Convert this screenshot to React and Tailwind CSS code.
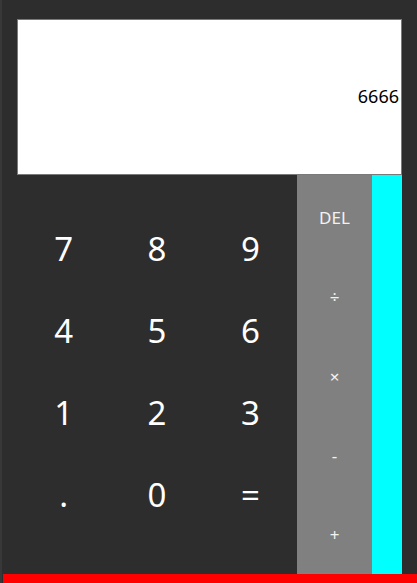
import React, { useState } from 'react';

const keys = ['7', '8', '9', '4', '5', '6', '1', '2', '3', '.', '0', '='];
const ops = ['DEL', '÷', '×', '-', '+'];

export default function App() {
  const [value] = useState('6666');

  return (
    <div
      className="w-[417px] h-[583px] flex bg-[#2d2d2d] overflow-hidden"
      style={{ fontFamily: '"Noto Sans", "Open Sans", sans-serif' }}
    >
      <div className="w-[2px] bg-[#383838]" />
      <div className="flex-1 flex flex-col ml-px">
        <div className="flex-1 flex flex-col pt-[19px] pl-[14px] pr-[15px]">
          <div className="h-[156px] bg-white border border-[#7a7a7a] flex items-center justify-end pr-[2px]">
            <span className="text-[18px] text-black leading-none mb-[2px]">{value}</span>
          </div>
          <div className="flex-1 flex">
            <div className="flex-1 flex flex-col justify-center">
              <div className="grid grid-cols-3 grid-rows-[repeat(4,82px)] mb-[6px]">
                {keys.map((k) => (
                  <button
                    key={k}
                    className="flex items-center justify-center text-white text-[33px] leading-none"
                  >
                    {k}
                  </button>
                ))}
              </div>
            </div>
            <div className="w-[75px] bg-[#808080] flex flex-col pt-[3px]">
              {ops.map((o) => (
                <button
                  key={o}
                  className="flex-1 flex items-center justify-center text-[#f2f2f2] text-[17px] leading-none"
                >
                  {o}
                </button>
              ))}
            </div>
            <div className="w-[30px] bg-[#00ffff]" />
          </div>
        </div>
        <div className="h-[9px] bg-[#ff0000]" />
      </div>
    </div>
  );
}
